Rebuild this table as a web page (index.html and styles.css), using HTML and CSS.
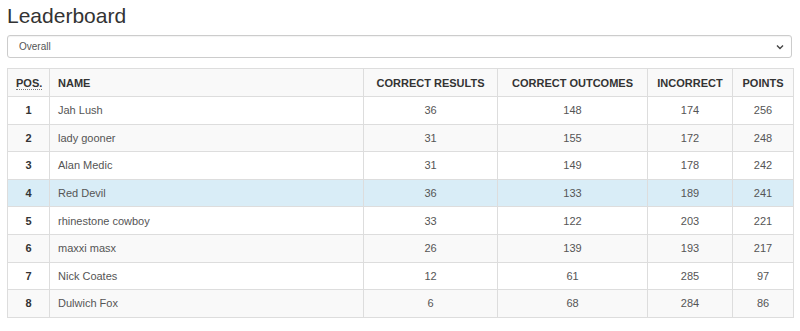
FILE: index.html
```html
<!DOCTYPE html>
<html>
<head>
<meta charset="utf-8">
<link rel="stylesheet" href="styles.css">
</head>
<body>
<div class="page">
  <h1 class="title">Leaderboard</h1>
  <div class="select">
    <span class="select-text">Overall</span>
    <svg class="chev" width="8" height="6" viewBox="0 0 8 6"><path d="M1 1.5 L4 4.5 L7 1.5" fill="none" stroke="#444" stroke-width="1.4"/></svg>
  </div>
  <table class="board">
    <colgroup>
      <col class="c-pos"><col class="c-name"><col class="c-res"><col class="c-out"><col class="c-inc"><col class="c-pts">
    </colgroup>
    <thead>
      <tr>
        <th class="center"><abbr class="abbr">POS.</abbr></th>
        <th class="left">NAME</th>
        <th class="center">CORRECT RESULTS</th>
        <th class="center">CORRECT OUTCOMES</th>
        <th class="center">INCORRECT</th>
        <th class="center">POINTS</th>
      </tr>
    </thead>
    <tbody>
      <tr><td class="pos">1</td><td class="name">Jah Lush</td><td>36</td><td>148</td><td>174</td><td>256</td></tr>
      <tr><td class="pos">2</td><td class="name">lady gooner</td><td>31</td><td>155</td><td>172</td><td>248</td></tr>
      <tr><td class="pos">3</td><td class="name">Alan Medic</td><td>31</td><td>149</td><td>178</td><td>242</td></tr>
      <tr class="info"><td class="pos">4</td><td class="name">Red Devil</td><td>36</td><td>133</td><td>189</td><td>241</td></tr>
      <tr><td class="pos">5</td><td class="name">rhinestone cowboy</td><td>33</td><td>122</td><td>203</td><td>221</td></tr>
      <tr><td class="pos">6</td><td class="name">maxxi masx</td><td>26</td><td>139</td><td>193</td><td>217</td></tr>
      <tr><td class="pos">7</td><td class="name">Nick Coates</td><td>12</td><td>61</td><td>285</td><td>97</td></tr>
      <tr><td class="pos">8</td><td class="name">Dulwich Fox</td><td>6</td><td>68</td><td>284</td><td>86</td></tr>
    </tbody>
  </table>
</div>
</body>
</html>
```
FILE: styles.css
```css
html, body {
  margin: 0;
  padding: 0;
  background: #fff;
}
.page {
  padding: 0 7px;
  font-family: "Liberation Sans", Arial, sans-serif;
  color: #555;
}
.title {
  margin: 0;
  padding-top: 4px;
  font-size: 21px;
  line-height: 24px;
  font-weight: normal;
  color: #333;
  height: 31px;
}
.select {
  box-sizing: border-box;
  height: 23px;
  width: 785px;
  border: 1px solid #ccc;
  border-radius: 3px;
  display: flex;
  align-items: center;
  justify-content: space-between;
  padding: 0 7px 0 11px;
  font-size: 10px;
  color: #555;
  box-shadow: inset 0 1px 1px rgba(0,0,0,0.05);
}
.board {
  margin-top: 10px;
  width: 786px;
  border-collapse: collapse;
  table-layout: fixed;
  font-size: 11px;
  border: 1px solid #ddd;
}
.c-pos { width: 42px; }
.c-name { width: 314px; }
.c-res { width: 134px; }
.c-out { width: 150px; }
.c-inc { width: 85px; }
.c-pts { width: 61px; }
.board th, .board td {
  border: 1px solid #ddd;
  padding: 0 8px;
  text-align: center;
}
.board th {
  height: 27px;
  font-weight: bold;
  color: #333;
  background: #f9f9f9;
  border-bottom-width: 1px;
}
.board th.left { text-align: left; }
.board td { height: 26.6px; }
.board td.name { text-align: left; }
.board td.pos { font-weight: bold; color: #333; }
.board tbody tr:nth-child(even) { background: #f9f9f9; }
.board tbody tr.info { background: #d9edf7; }
.abbr {
  text-decoration: none;
  border-bottom: 1px dotted #777;
}
```
